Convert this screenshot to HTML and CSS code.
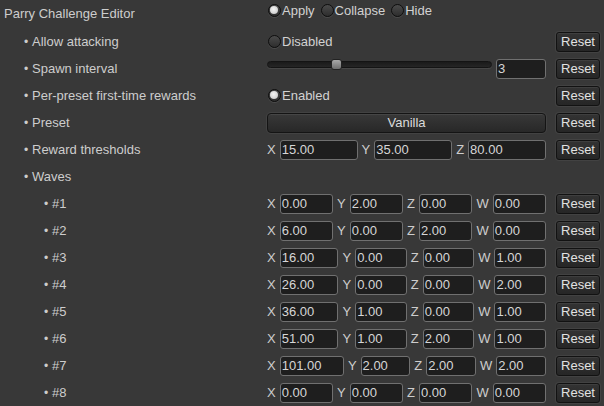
FILE: index.html
```html
<!DOCTYPE html>
<html>
<head>
<meta charset="utf-8">
<link rel="stylesheet" href="styles.css">
</head>
<body>
<div class="editor">
  <div class="header">
    <div class="title">Parry Challenge Editor</div>
    <div class="radios">
      <span class="toggle on"><span class="knob"></span>Apply</span>
      <span class="toggle"><span class="knob"></span>Collapse</span>
      <span class="toggle"><span class="knob"></span>Hide</span>
    </div>
  </div>

  <div class="row">
    <div class="label l1"><span class="bullet">•</span>Allow attacking</div>
    <div class="control"><span class="toggle"><span class="knob"></span>Disabled</span></div>
    <button class="reset">Reset</button>
  </div>

  <div class="row">
    <div class="label l1"><span class="bullet">•</span>Spawn interval</div>
    <div class="control">
      <div class="slider"><div class="track"></div><div class="thumb"></div></div>
      <div class="field int">3</div>
    </div>
    <button class="reset">Reset</button>
  </div>

  <div class="row">
    <div class="label l1"><span class="bullet">•</span>Per-preset first-time rewards</div>
    <div class="control"><span class="toggle on"><span class="knob"></span>Enabled</span></div>
    <button class="reset">Reset</button>
  </div>

  <div class="row">
    <div class="label l1"><span class="bullet">•</span>Preset</div>
    <div class="control"><button class="popup">Vanilla</button></div>
    <button class="reset">Reset</button>
  </div>

  <div class="row">
    <div class="label l1"><span class="bullet">•</span>Reward thresholds</div>
    <div class="control">
      <span class="axis">X</span><div class="field">15.00</div>
      <span class="axis">Y</span><div class="field">35.00</div>
      <span class="axis">Z</span><div class="field">80.00</div>
    </div>
    <button class="reset">Reset</button>
  </div>

  <div class="row">
    <div class="label l1"><span class="bullet">•</span>Waves</div>
  </div>

  <div class="row">
    <div class="label l2"><span class="bullet">•</span>#1</div>
    <div class="control">
      <span class="axis">X</span><div class="field">0.00</div>
      <span class="axis">Y</span><div class="field">2.00</div>
      <span class="axis">Z</span><div class="field">0.00</div>
      <span class="axis">W</span><div class="field">0.00</div>
    </div>
    <button class="reset">Reset</button>
  </div>

  <div class="row">
    <div class="label l2"><span class="bullet">•</span>#2</div>
    <div class="control">
      <span class="axis">X</span><div class="field">6.00</div>
      <span class="axis">Y</span><div class="field">0.00</div>
      <span class="axis">Z</span><div class="field">2.00</div>
      <span class="axis">W</span><div class="field">0.00</div>
    </div>
    <button class="reset">Reset</button>
  </div>

  <div class="row">
    <div class="label l2"><span class="bullet">•</span>#3</div>
    <div class="control">
      <span class="axis">X</span><div class="field">16.00</div>
      <span class="axis">Y</span><div class="field">0.00</div>
      <span class="axis">Z</span><div class="field">0.00</div>
      <span class="axis">W</span><div class="field">1.00</div>
    </div>
    <button class="reset">Reset</button>
  </div>

  <div class="row">
    <div class="label l2"><span class="bullet">•</span>#4</div>
    <div class="control">
      <span class="axis">X</span><div class="field">26.00</div>
      <span class="axis">Y</span><div class="field">0.00</div>
      <span class="axis">Z</span><div class="field">0.00</div>
      <span class="axis">W</span><div class="field">2.00</div>
    </div>
    <button class="reset">Reset</button>
  </div>

  <div class="row">
    <div class="label l2"><span class="bullet">•</span>#5</div>
    <div class="control">
      <span class="axis">X</span><div class="field">36.00</div>
      <span class="axis">Y</span><div class="field">1.00</div>
      <span class="axis">Z</span><div class="field">0.00</div>
      <span class="axis">W</span><div class="field">1.00</div>
    </div>
    <button class="reset">Reset</button>
  </div>

  <div class="row">
    <div class="label l2"><span class="bullet">•</span>#6</div>
    <div class="control">
      <span class="axis">X</span><div class="field">51.00</div>
      <span class="axis">Y</span><div class="field">1.00</div>
      <span class="axis">Z</span><div class="field">2.00</div>
      <span class="axis">W</span><div class="field">1.00</div>
    </div>
    <button class="reset">Reset</button>
  </div>

  <div class="row">
    <div class="label l2"><span class="bullet">•</span>#7</div>
    <div class="control">
      <span class="axis">X</span><div class="field">101.00</div>
      <span class="axis">Y</span><div class="field">2.00</div>
      <span class="axis">Z</span><div class="field">2.00</div>
      <span class="axis">W</span><div class="field">2.00</div>
    </div>
    <button class="reset">Reset</button>
  </div>

  <div class="row">
    <div class="label l2"><span class="bullet">•</span>#8</div>
    <div class="control">
      <span class="axis">X</span><div class="field">0.00</div>
      <span class="axis">Y</span><div class="field">0.00</div>
      <span class="axis">Z</span><div class="field">0.00</div>
      <span class="axis">W</span><div class="field">0.00</div>
    </div>
    <button class="reset">Reset</button>
  </div>
</div>
</body>
</html>
```

FILE: styles.css
```css
html, body {
  margin: 0;
  padding: 0;
  background: #383838;
}

body {
  font-family: "Liberation Sans", Arial, sans-serif;
  font-size: 13px;
  color: #cdcdcd;
  overflow: hidden;
}

.editor {
  padding: 0 4px;
  width: 604px;
  box-sizing: border-box;
}

.header {
  display: flex;
  align-items: flex-start;
  height: 28px;
}

.title {
  width: 263px;
  flex: none;
  line-height: 16px;
  margin-top: 6px;
}

.radios {
  display: flex;
  align-items: center;
  height: 20px;
  gap: 5px;
}

.row {
  display: flex;
  align-items: center;
  height: 27px;
}

.label {
  width: 263px;
  flex: none;
  box-sizing: border-box;
  white-space: nowrap;
  line-height: 16px;
}

.label.l1 { padding-left: 20px; }
.label.l2 { padding-left: 40px; }

.bullet {
  display: inline-block;
  width: 8px;
  font-size: 12px;
}

.control {
  flex: 1 1 auto;
  min-width: 0;
  display: flex;
  align-items: center;
  gap: 4px;
}

.toggle {
  display: inline-flex;
  align-items: center;
  height: 20px;
  white-space: nowrap;
  color: #d2d2d2;
}

.knob {
  position: relative;
  width: 13px;
  height: 13px;
  box-sizing: border-box;
  margin: 0 1px 0 1px;
  border-radius: 50%;
  border: 1px solid #0e0e0e;
  background: linear-gradient(#4a4a4a, #2e2e2e);
  box-shadow: 0 1px 0 rgba(255,255,255,0.1);
}

.toggle.on .knob::after {
  content: "";
  position: absolute;
  left: 1px;
  top: 1px;
  width: 8px;
  height: 8px;
  border-radius: 50%;
  background: radial-gradient(circle at 45% 40%, #f4f4f4 0%, #d6d6d6 60%, #a8a8a8 100%);
}

.slider {
  position: relative;
  flex: 1 1 auto;
  height: 11px;
  margin-bottom: 9px;
}

.track {
  position: absolute;
  left: 0;
  right: 0;
  top: 2px;
  height: 7px;
  box-sizing: border-box;
  border-radius: 4px;
  border: 1px solid #141414;
  background: linear-gradient(#1a1a1a, #262626);
  box-shadow: 0 1px 0 rgba(255,255,255,0.08);
}

.thumb {
  position: absolute;
  left: 64px;
  top: 0;
  width: 11px;
  height: 11px;
  box-sizing: border-box;
  border-radius: 3px;
  border: 1px solid #222;
  background: linear-gradient(#a9a9a9, #6e6e6e);
}

.field {
  flex: 1 1 auto;
  height: 20px;
  box-sizing: border-box;
  padding: 0 2px 0 1px;
  border: 1px solid #707070;
  border-radius: 3px;
  background: #1e1e1e;
  color: #d6d6d6;
  line-height: 18px;
  white-space: nowrap;
}

.field.int {
  flex: none;
  width: 50px;
}

.axis {
  flex: none;
  color: #cdcdcd;
  line-height: 16px;
}

button {
  font-family: inherit;
  font-size: 13px;
  margin: 0;
  padding: 0;
  cursor: default;
}

.reset {
  flex: none;
  width: 44px;
  height: 20px;
  margin-left: 10px;
  box-sizing: border-box;
  border: 1px solid #121212;
  border-radius: 3px;
  background: linear-gradient(#333333, #262626);
  box-shadow: 0 0 0 1px rgba(255,255,255,0.05), inset 0 1px 0 rgba(255,255,255,0.06);
  color: #e2e2e2;
  line-height: 18px;
}

.popup {
  flex: 1 1 auto;
  height: 20px;
  box-sizing: border-box;
  border: 1px solid #141414;
  border-radius: 4px;
  background: linear-gradient(#383838, #282828);
  box-shadow: 0 0 0 1px rgba(255,255,255,0.05), inset 0 1px 0 rgba(255,255,255,0.07);
  color: #dcdcdc;
  line-height: 18px;
  text-align: center;
}
```
